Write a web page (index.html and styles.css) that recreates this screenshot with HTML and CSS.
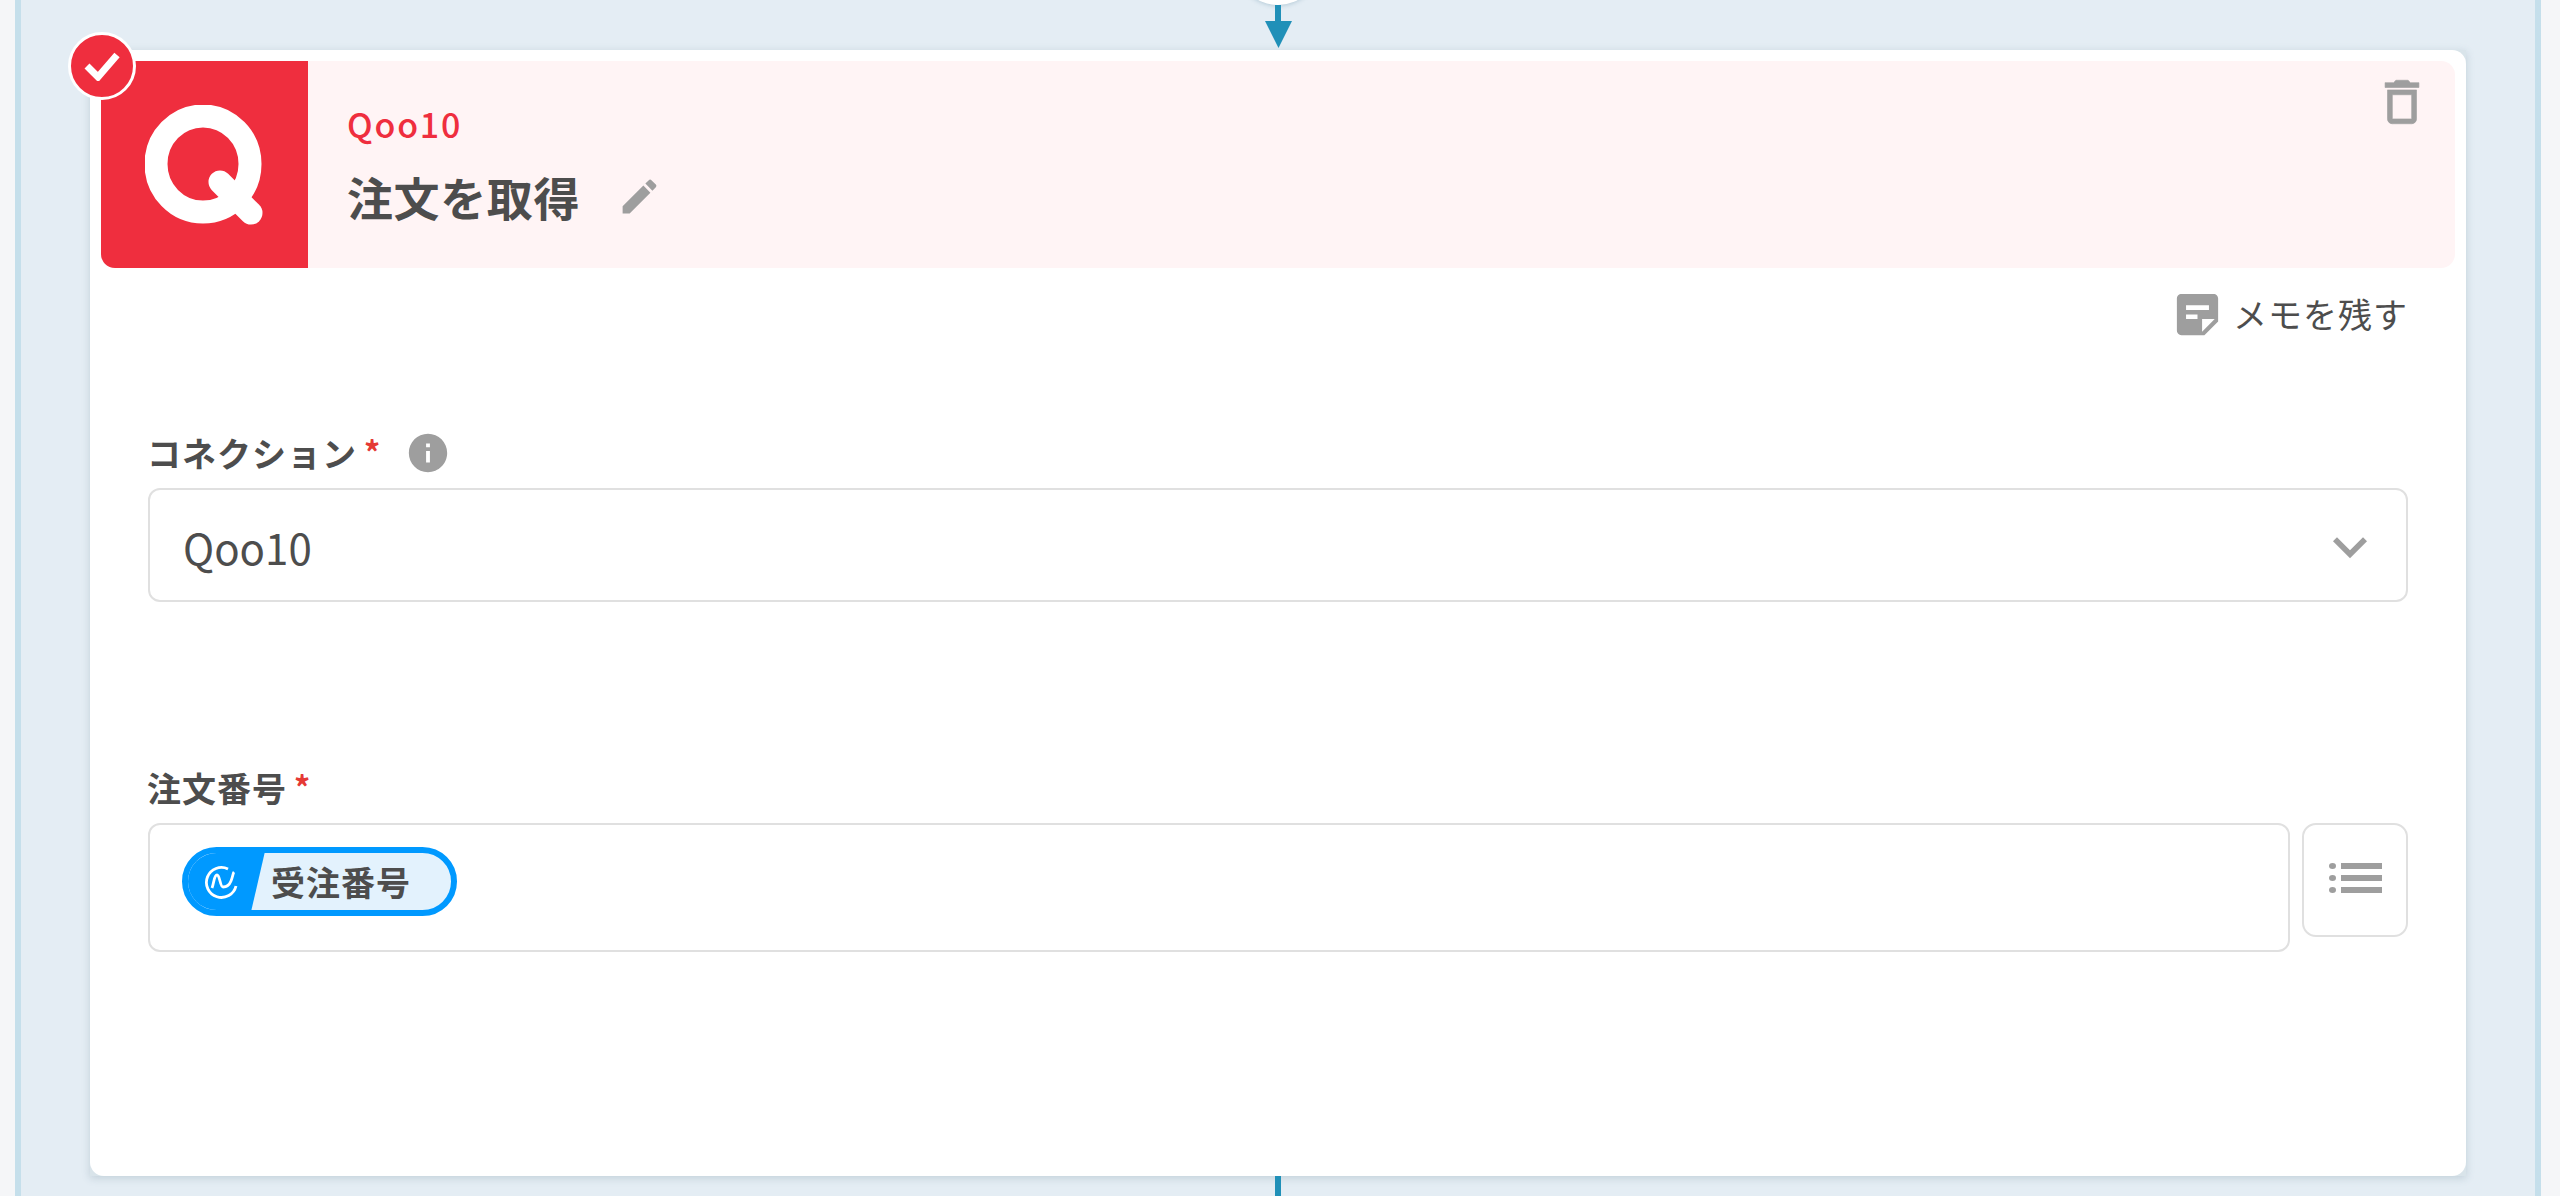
FILE: index.html
```html
<!DOCTYPE html>
<html lang="ja">
<head>
<meta charset="utf-8">
<title>Qoo10 注文を取得</title>
<link rel="stylesheet" href="styles.css">
</head>
<body>
<main class="canvas">
  <div class="connector connector-top">
    <span class="add-node"></span>
    <span class="line"></span>
    <svg class="arrow-head" viewBox="0 0 27 27"><path d="M0 0H27L13.5 27z"/></svg>
  </div>
  <section class="card-shell">
    <div class="card">
      <span class="badge">
        <svg viewBox="0 0 36 30"><path d="M3 15l11 11L33 4" /></svg>
      </span>
      <header class="head">
        <div class="logo">
          <svg viewBox="0 0 118 120"><ellipse cx="58" cy="59" rx="47" ry="48"/><path d="M75 77l31 31"/></svg>
        </div>
        <div class="head-text">
          <div class="app-name">Qoo10</div>
          <div class="title-row">
            <h1 class="title">注文を取得</h1>
            <svg class="pencil" viewBox="0 0 24 24"><path d="M3 17.25V21h3.75L17.81 9.94l-3.75-3.75L3 17.25zM20.71 7.04c.39-.39.39-1.02 0-1.41l-2.34-2.34c-.39-.39-1.02-.39-1.41 0l-1.83 1.83 3.75 3.75 1.83-1.83z"/></svg>
          </div>
        </div>
        <svg class="trash" viewBox="0 0 24 24"><path d="M6 19c0 1.1.9 2 2 2h8c1.1 0 2-.9 2-2V7H6v12zM8 9h8v10H8V9zm7.5-5l-1-1h-5l-1 1H5v2h14V4h-3.5z"/></svg>
      </header>
      <div class="memo-row">
        <svg class="memo-icon" viewBox="0 0 24 24"><path fill-rule="evenodd" d="M19 3H4.99C3.89 3 3 3.9 3 5l.01 14c0 1.1.89 2 1.99 2h10l6-6V5c0-1.1-.9-2-2-2zM7 8h10v2H7V8zm5 6H7v-2h5v2zm2 5.5V14h5.5L14 19.5z"/></svg>
        <span class="memo-text">メモを残す</span>
      </div>
      <div class="form">
        <div class="field field-connection">
          <div class="label-row">
            <label class="label">コネクション</label><span class="star">*</span>
            <svg class="info" viewBox="0 0 24 24"><path d="M12 2C6.48 2 2 6.48 2 12s4.48 10 10 10 10-4.48 10-10S17.52 2 12 2zm1 15h-2v-6h2v6zm0-8h-2V7h2v2z"/></svg>
          </div>
          <div class="select">
            <span class="select-value">Qoo10</span>
            <svg class="chevron" viewBox="0 0 24 24"><path d="M16.59 8.59L12 13.17 7.41 8.59 6 10l6 6 6-6z"/></svg>
          </div>
        </div>
        <div class="field field-order">
          <div class="label-row">
            <label class="label">注文番号</label><span class="star">*</span>
          </div>
          <div class="input-row">
            <div class="input">
              <span class="pill">
                <svg class="pill-icon" viewBox="0 0 34 34"><path d="M24 4A15 15 0 1 0 32 21"/><path d="M8 23C10 18 10 10 13 10s3 12 6 12 6-1 8-6 2-8 3-9"/></svg>
                <span class="pill-text">受注番号</span>
              </span>
            </div>
            <button class="list-btn" type="button" aria-label="list">
              <span class="list-icon"><i></i><b></b><i></i><b></b><i></i><b></b></span>
            </button>
          </div>
        </div>
      </div>
    </div>
  </section>
  <div class="connector connector-bottom"><span class="line"></span></div>
</main>
</body>
</html>
```
FILE: styles.css
```css
* { box-sizing: border-box; }
html, body { margin: 0; height: 1196px; overflow: hidden; }
body {
  background: #f5f6f8;
  padding: 0 19px 0 15px;
  font-family: "Noto Sans CJK JP", "Noto Sans", sans-serif;
  color: #4d4d4d;
}
.canvas {
  height: 1196px;
  background: #e4edf4;
  border-left: 6px solid #c5dfeb;
  border-right: 6px solid #c5dfeb;
  padding: 0 69px;
  display: flex;
  flex-direction: column;
}
.connector {
  position: relative;
  display: flex;
  flex-direction: column;
  align-items: center;
  flex: none;
}
.connector-top { height: 50px; }
.connector-bottom { height: 20px; }
.line { display: block; width: 6px; background: #2090b8; flex: 1; }
.connector-top .line { position: absolute; top: 5px; height: 20px; flex: none; }
.add-node {
  position: absolute;
  top: -79px;
  width: 84px;
  height: 84px;
  border-radius: 50%;
  background: #fff;
  box-shadow: 0 1px 4px rgba(120, 160, 180, .45);
}
.arrow-head { position: absolute; top: 21px; width: 27px; height: 27px; fill: #2090b8; }

.card-shell {
  flex: none;
  background: #d9e4ea;
  box-shadow: 0 2px 8px rgba(70, 100, 120, .22);
}
.card {
  position: relative;
  background: #fff;
  border-radius: 14px;
  padding: 11px 11px 224px;
}
.badge {
  position: absolute;
  left: -22px;
  top: -18px;
  width: 68px;
  height: 68px;
  border-radius: 50%;
  background: #ef2e3e;
  border: 3px solid #fff;
  display: flex;
  align-items: center;
  justify-content: center;
  z-index: 1;
}
.badge svg { width: 36px; height: 30px; fill: none; stroke: #fff; stroke-width: 7; }

.head {
  display: flex;
  height: 207px;
  background: #fff4f5;
  border-radius: 14px;
}
.logo {
  flex: none;
  width: 207px;
  height: 207px;
  background: #ef2e3e;
  border-radius: 0 0 0 14px;
  display: flex;
  align-items: center;
  justify-content: center;
}
.logo svg { width: 118px; height: 120px; margin-left: -1px; fill: none; stroke: #fff; stroke-width: 23; stroke-linecap: round; }
.head-text { padding: 39px 0 0 39px; }
.app-name {
  font-size: 34px;
  line-height: 48px;
  letter-spacing: 1.8px;
  font-weight: 500;
  color: #ef2e3e;
}
.title-row { display: flex; align-items: center; margin-top: 15px; }
.title {
  margin: 0;
  font-size: 46px;
  line-height: 66px;
  letter-spacing: 0.6px;
  font-weight: 700;
  color: #4d4d4d;
}
.pencil { width: 45px; height: 45px; margin-left: 37px; fill: #9e9e9e; }
.trash { width: 58px; height: 58px; margin: 12px 24px 0 auto; fill: #9e9e9e; stroke: #9e9e9e; stroke-width: .25; flex: none; }

.memo-row {
  display: flex;
  justify-content: flex-end;
  align-items: center;
  height: 56px;
  margin-top: 18px;
  padding-right: 47px;
}
.memo-icon { width: 55px; height: 55px; fill: #9e9e9e; margin-right: 8px; }
.memo-text { font-size: 34px; line-height: 48px; letter-spacing: 1px; color: #4d4d4d; }

.form { padding: 0 47px; }
.field-connection { margin-top: 86px; }
.field-order { margin-top: 161px; }
.label-row { display: flex; height: 50px; align-items: center; margin-bottom: 10px; }
.label { font-size: 34px; line-height: 50px; letter-spacing: 1px; font-weight: 700; color: #4d4d4d; margin-left: -1px; }
.star { align-self: flex-start; margin-left: 7px; margin-top: 3px; font-size: 32px; line-height: 40px; font-weight: 700; color: #e53935; }
.info { width: 46px; height: 46px; margin-left: 25px; fill: #9e9e9e; }

.select {
  height: 114px;
  border: 2px solid #e0e0e0;
  border-radius: 12px;
  display: flex;
  align-items: center;
  justify-content: space-between;
  padding: 0 22px 0 33px;
}
.select-value { font-size: 42px; line-height: 60px; letter-spacing: 0; color: #4d4d4d; margin-top: 3px; }
.chevron { width: 68px; height: 68px; margin-top: 4px; fill: #9e9e9e; }

.input-row { display: flex; gap: 12px; align-items: flex-start; }
.input {
  flex: 1;
  height: 129px;
  border: 2px solid #e0e0e0;
  border-radius: 12px;
  padding: 22px 0 0 32px;
}
.pill {
  position: relative;
  display: inline-flex;
  align-items: center;
  width: 275px;
  height: 69px;
  border-radius: 35px;
  border: 6px solid #0099ff;
  background: #e3f2fd;
  overflow: hidden;
}
.pill::before {
  content: "";
  position: absolute;
  left: -6px;
  top: -6px;
  bottom: -6px;
  width: 84px;
  background: #0099ff;
  clip-path: polygon(0 0, 100% 0, 81% 100%, 0 100%);
}
.pill-icon {
  position: relative;
  flex: none;
  width: 34px;
  height: 34px;
  margin-left: 16px;
  fill: none;
  stroke: #fff;
  stroke-width: 2.8;
}
.pill-text {
  position: relative;
  margin-left: 33px;
  font-size: 34px;
  line-height: 48px;
  letter-spacing: 1px;
  font-weight: 700;
  color: #4d4d4d;
}
.list-btn {
  flex: none;
  width: 106px;
  height: 114px;
  padding: 0;
  background: #fff;
  border: 2px solid #e0e0e0;
  border-radius: 14px;
  display: flex;
  align-items: center;
  justify-content: center;
}
.list-icon {
  display: grid;
  grid-template-columns: 7px 41px;
  column-gap: 5px;
  row-gap: 6px;
  margin-bottom: 4px;
}
.list-icon i { display: block; height: 6px; background: #9e9e9e; border-radius: 50%; }
.list-icon b { display: block; height: 6px; background: #9e9e9e; }
```
